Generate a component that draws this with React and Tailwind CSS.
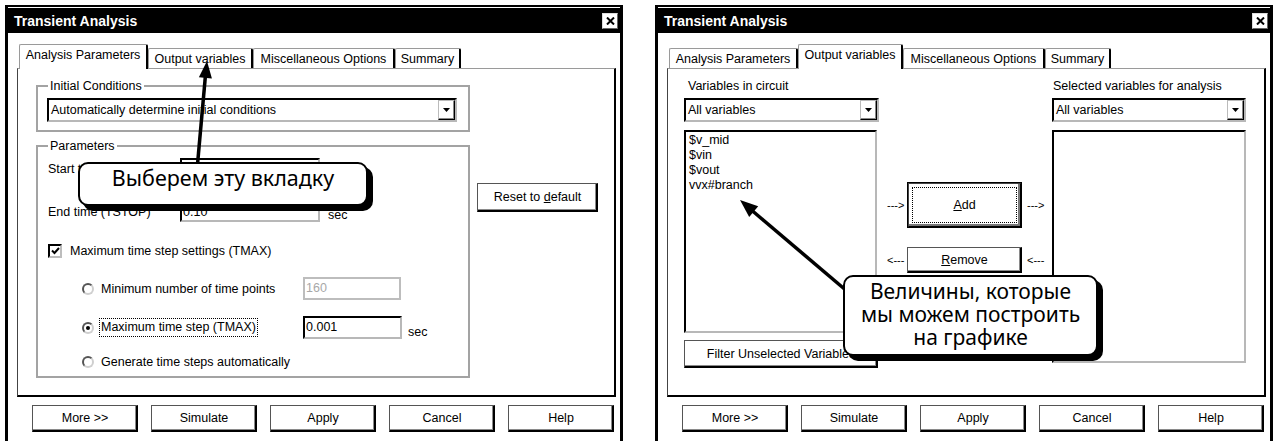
import React from "react";

const FONT = "font-['Liberation_Sans',Arial,sans-serif]";
const CALLOUT_FONT = "font-['Noto_Sans','Open_Sans',sans-serif]";

const Raised = ({ className = "", children }) => (
  <div
    className={`flex items-center justify-center bg-white border border-t-[#555] border-l-[#555] border-r-black border-b-black shadow-[inset_-1px_-1px_0_#000,inset_-2px_-2px_0_#8a8a8a] ${className}`}
  >
    {children}
  </div>
);

const Sunken = ({ className = "", children }) => (
  <div
    className={`flex items-center border-2 border-t-black border-l-black border-r-[#b8b8b8] border-b-[#b8b8b8] bg-white pl-[1px] ${className}`}
  >
    {children}
  </div>
);

const Combo = ({ className = "", text }) => (
  <div
    className={`flex items-center h-[24px] border-2 border-t-black border-l-black border-r-[#b8b8b8] border-b-[#b8b8b8] bg-white ${className}`}
  >
    <span className="flex-1 pl-[2px] leading-[14px]">{text}</span>
    <div className="w-[17px] h-[20px] flex items-center justify-center border border-t-[#bbb] border-l-[#bbb] border-r-black border-b-black shadow-[inset_-1px_-1px_0_#888]">
      <svg width="7" height="4" viewBox="0 0 7 4">
        <path d="M0 0h7L3.5 4z" fill="#000" />
      </svg>
    </div>
  </div>
);

const Radio = ({ on }) => (
  <div className="w-[12px] h-[12px] shrink-0 rounded-full border-2 border-t-[#555] border-l-[#555] border-r-[#cfcfcf] border-b-[#cfcfcf] bg-white flex items-center justify-center">
    {on && <div className="w-[4px] h-[4px] rounded-full bg-black" />}
  </div>
);

const Check = () => (
  <div className="w-[14px] h-[14px] shrink-0 border-2 border-t-black border-l-black border-r-[#bdbdbd] border-b-[#bdbdbd] bg-white flex items-center justify-center">
    <svg width="9" height="8" viewBox="0 0 9 8">
      <path d="M1 3.5l2.5 2.5L8 1" stroke="#000" strokeWidth="2" fill="none" />
    </svg>
  </div>
);

const Tab = ({ label, w, active }) => (
  <div
    className={`${w} flex items-center justify-center bg-white border-t border-l border-[#9a9a9a] border-r-2 border-r-black rounded-t-[2px] ${
      active ? "h-[25px] -mb-[1px] relative z-10 pb-[3px]" : "h-[20px] pt-[1px]"
    }`}
  >
    {label}
  </div>
);

function Dialog({ active, children }) {
  return (
    <div className="w-[618px] h-[460px] shrink-0 border-x-[3px] border-t-2 border-black pt-[1px] flex flex-col bg-white">
      <div className="h-[25px] bg-black flex items-center justify-between pl-[6px] pr-[2px]">
        <span className="text-white font-bold text-[14px] leading-none">Transient Analysis</span>
        <div className="w-[16px] h-[16px] bg-white border border-t-[#ddd] border-l-[#ddd] border-r-[#666] border-b-[#666] flex items-center justify-center">
          <svg width="9" height="8" viewBox="0 0 9 8">
            <path d="M1 0.5l7 7M8 0.5l-7 7" stroke="#000" strokeWidth="2" />
          </svg>
        </div>
      </div>
      <div className="pl-[9px] pr-[4px] pt-[11px] flex flex-col">
        <div className="flex items-end pl-[2px] h-[24px]">
          <Tab w="w-[129px]" label="Analysis Parameters" active={active === 0} />
          <Tab w="w-[105px]" label="Output variables" active={active === 1} />
          <Tab w="w-[142px]" label="Miscellaneous Options" active={active === 2} />
          <Tab w="w-[66px]" label="Summary" active={active === 3} />
        </div>
        <div className="h-[329px] border-t border-l border-t-[#9a9a9a] border-l-[#444] border-r-2 border-b-2 border-r-black border-b-black">
          {children}
        </div>
        <div className="flex justify-between mt-[8px] pl-[15px] pr-[2px]">
          <Raised className="w-[106px] h-[27px]">More &gt;&gt;</Raised>
          <Raised className="w-[106px] h-[27px]">Simulate</Raised>
          <Raised className="w-[106px] h-[27px]">Apply</Raised>
          <Raised className="w-[106px] h-[27px]">Cancel</Raised>
          <Raised className="w-[106px] h-[27px]">Help</Raised>
        </div>
      </div>
    </div>
  );
}

function AnalysisPanel() {
  return (
    <div className="flex pl-[18px] pt-[10px]">
      <div className="w-[434px] flex flex-col">
        <fieldset className="border-2 border-[#a3a3a3] pb-[8px]">
          <legend className="ml-[10px] px-[2px] leading-[14px]">Initial Conditions</legend>
          <Combo className="ml-[9px] mt-[5px] w-[410px]" text="Automatically determine initial conditions" />
        </fieldset>
        <fieldset className="border-2 border-[#a3a3a3] mt-[7px] pb-[6px]">
          <legend className="ml-[10px] px-[2px] leading-[14px]">Parameters</legend>
          <div className="flex items-center h-[21px] mt-[5px] pl-[10px]">
            <span className="w-[132px] leading-[14px]">Start time (TSTART)</span>
            <Sunken className="w-[140px] h-[21px]">0</Sunken>
          </div>
          <div className="flex items-center h-[20px] mt-[23px] pl-[10px]">
            <span className="w-[132px] leading-[14px]">End time (TSTOP)</span>
            <Sunken className="w-[140px] h-[20px]">0.10</Sunken>
            <span className="ml-[8px] self-end leading-[14px]">sec</span>
          </div>
          <div className="flex items-center h-[16px] mt-[21px] pl-[10px]">
            <Check />
            <span className="ml-[8px] leading-[14px]">Maximum time step settings (TMAX)</span>
          </div>
          <div className="flex items-center h-[23px] mt-[18px] pl-[44px]">
            <Radio />
            <span className="ml-[7px] w-[202px] leading-[14px]">Minimum number of time points</span>
            <div className="w-[98px] h-[23px] border-2 border-[#bdbdbd] flex items-center pl-[1px] text-[#a8a8a8]">
              160
            </div>
          </div>
          <div className="flex items-center h-[23px] mt-[16px] pl-[44px]">
            <Radio on />
            <div className="ml-[5px] w-[204px] flex">
              <span className="border border-dotted border-black px-[1px] leading-[17px]">Maximum time step (TMAX)</span>
            </div>
            <Sunken className="w-[99px] h-[23px]">0.001</Sunken>
            <span className="ml-[6px] self-end leading-[14px]">sec</span>
          </div>
          <div className="flex items-center h-[16px] mt-[15px] pl-[44px]">
            <Radio />
            <span className="ml-[7px] leading-[14px]">Generate time steps automatically</span>
          </div>
        </fieldset>
      </div>
      <div className="ml-[7px] mt-[104px]">
        <Raised className="w-[121px] h-[29px]">
          <span>
            Reset to <span className="underline">d</span>efault
          </span>
        </Raised>
      </div>
    </div>
  );
}

function OutputPanel() {
  return (
    <div className="flex pl-[16px] pt-[10px]">
      <div className="w-[195px] flex flex-col">
        <div className="leading-[14px] pl-[4px]">Variables in circuit</div>
        <Combo className="mt-[5px] w-[195px]" text="All variables" />
        <div className="mt-[8px] w-[193px] h-[203px] border-2 border-t-black border-l-black border-r-[#b8b8b8] border-b-[#b8b8b8] pt-[1px] pl-[3px] leading-[15px]">
          <div>$v_mid</div>
          <div>$vin</div>
          <div>$vout</div>
          <div>vvx#branch</div>
        </div>
        <Raised className="mt-[7px] w-[194px] h-[28px]">Filter Unselected Variables</Raised>
      </div>
      <div className="ml-[8px] w-[165px] mt-[103px] flex flex-col">
        <div className="flex items-center h-[46px]">
          <span className="w-[20px] text-[11px]">---&gt;</span>
          <div className="w-[115px] h-[46px] border border-black">
            <div className="w-full h-full border border-t-[#444] border-l-[#444] border-r-black border-b-black shadow-[inset_-2px_-2px_0_#777] p-[3px]">
              <div className="w-full h-full border border-dotted border-black flex items-center justify-center">
                <span>
                  <span className="underline">A</span>dd
                </span>
              </div>
            </div>
          </div>
          <span className="ml-[5px] text-[11px]">---&gt;</span>
        </div>
        <div className="flex items-center h-[26px] mt-[19px]">
          <span className="w-[20px] text-[11px]">&lt;---</span>
          <Raised className="w-[115px] h-[26px]">
            <span>
              <span className="underline">R</span>emove
            </span>
          </Raised>
          <span className="ml-[5px] text-[11px]">&lt;---</span>
        </div>
      </div>
      <div className="w-[194px] flex flex-col">
        <div className="leading-[14px] pl-[1px]">Selected variables for analysis</div>
        <Combo className="mt-[5px] w-[194px]" text="All variables" />
        <div className="mt-[8px] w-[194px] h-[233px] border-2 border-t-black border-l-black border-r-[#b8b8b8] border-b-[#b8b8b8]" />
      </div>
    </div>
  );
}

export default function App() {
  return (
    <div className={`${FONT} relative w-[1274px] h-[441px] overflow-hidden bg-white text-black text-[12.5px]`}>
      <div className="flex gap-[32px] pl-[5px] pt-[5px]">
        <Dialog active={0}>
          <AnalysisPanel />
        </Dialog>
        <Dialog active={1}>
          <OutputPanel />
        </Dialog>
      </div>

      <svg className="absolute left-0 top-0 pointer-events-none" width="1274" height="441">
        <line x1="197" y1="170" x2="205.4" y2="76" stroke="#000" strokeWidth="3.5" />
        <polygon points="207,61 211.9,78.5 198.9,77.3" fill="#000" />
        <line x1="848" y1="292" x2="752" y2="210.5" stroke="#000" strokeWidth="3.5" />
        <polygon points="740,200 758.2,206.3 749.2,216.9" fill="#000" />
      </svg>

      <div
        className={`${CALLOUT_FONT} absolute left-[78px] top-[162px] w-[290px] h-[44px] bg-white border-2 border-black rounded-[10px] shadow-[5px_5px_0_0_#000] flex justify-center text-[21.5px] leading-[28px]`}
      >
        Выберем эту вкладку
      </div>
      <div
        className={`${CALLOUT_FONT} absolute left-[843px] top-[275px] w-[255px] h-[81px] bg-white border-2 border-black rounded-[10px] shadow-[5px_5px_0_0_#000] flex flex-col items-center justify-center text-[21px] leading-[23px] pb-[3px]`}
      >
        <div>Величины, которые</div>
        <div>мы можем построить</div>
        <div>на графике</div>
      </div>
    </div>
  );
}
